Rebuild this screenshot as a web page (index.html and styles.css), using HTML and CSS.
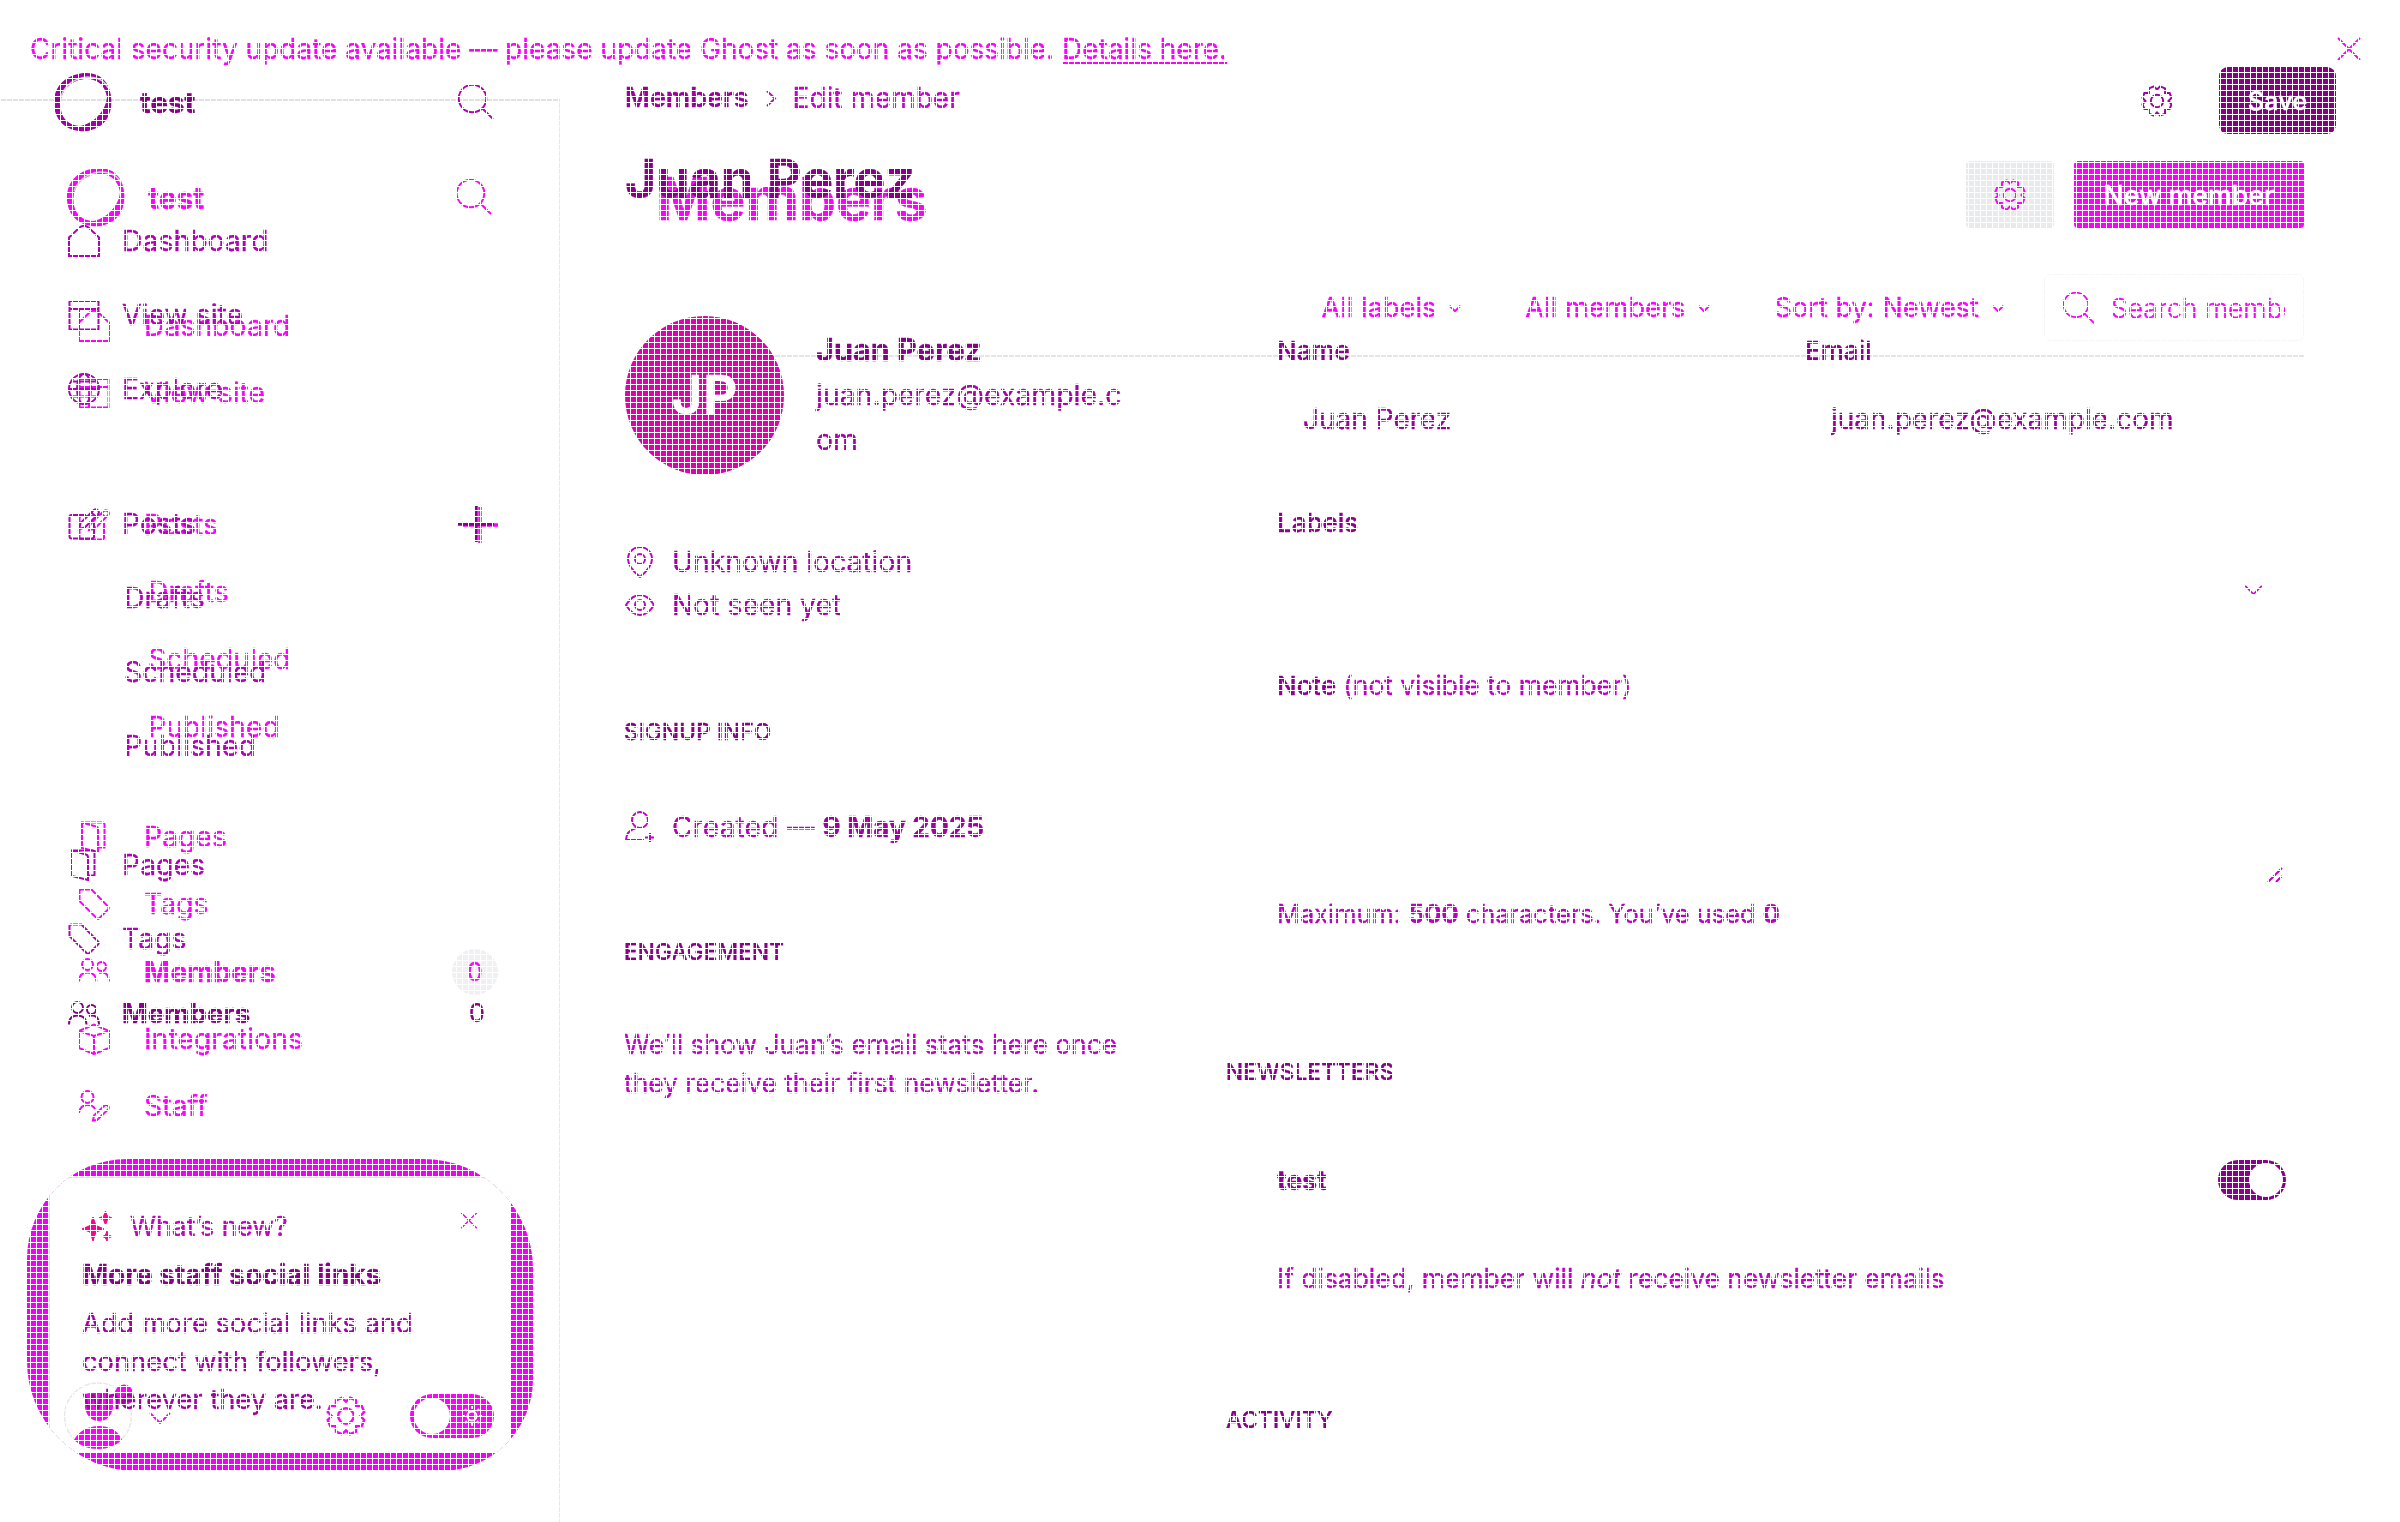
FILE: index.html
```html
<!DOCTYPE html>
<html lang="en">
<head>
<meta charset="utf-8">
<title>Ghost Admin – Members</title>
<link rel="stylesheet" href="styles.css">
</head>
<body>
<svg class="defs" width="0" height="0" aria-hidden="true">
  <symbol id="ring" viewBox="0 0 60 60"><path fill-rule="evenodd" d="M30 1C46 0 56 8 58 24C60 42 53 55 35 59C16 61 3 51 1 34C0 17 9 4 30 1ZM34 7C20 7 8 17 7.500 32C7 46 16 54 27 54C40 52 53 39 54 25C52 13 44 7 34 7Z" fill="currentColor"/><path d="M8 24Q15 7 34 5Q50 5 55 16" fill="none" stroke="#d4cfd6" stroke-width="1.6"/></symbol>
  <symbol id="search" viewBox="0 0 36 36"><circle cx="14.5" cy="14.5" r="13.8"/><path d="M24 24L35 35"/></symbol>
  <symbol id="home" viewBox="0 0 32 32"><path d="M1 31V12.5L11.5 2.5Q16 -1 20.500 2.500L31 12.500V31Z"/></symbol>
  <symbol id="site" viewBox="0 0 32 32"><path d="M1.500 2H30.500V30.500H1.500ZM1.500 10H30.500M11 10V30.500"/></symbol>
  <symbol id="globe" viewBox="0 0 32 32"><circle cx="16" cy="16" r="15"/><ellipse cx="16" cy="16" rx="7" ry="15"/><path d="M1 16H31M3.500 8.500H28.500M3.500 23.500H28.500"/></symbol>
  <symbol id="edit" viewBox="0 0 32 32"><path d="M18 7H3.500Q1.500 7 1.500 9V28.500Q1.500 30.500 3.500 30.500H24Q26 30.500 26 28.500V14M11 21L12.500 15L26 1.800Q28.500 0.500 30.500 3Q31.500 4.800 30 6.200L16.800 19.500ZM23.500 4.500L27.800 8.800"/></symbol>
  <symbol id="pages" viewBox="0 0 32 32"><path d="M4 1.500V27L20 31V8.500Q20 6 18 5.500ZM4 1.500H24.500Q26.500 1.500 26.500 3.500V26.500H20"/></symbol>
  <symbol id="tag" viewBox="0 0 32 32"><path d="M1.500 3Q1.500 1.500 3 1.500H13.500L30 18.500Q31.500 20 30 21.500L21 30.500Q20 31.500 18.500 30L1.500 13Z"/></symbol>
  <symbol id="people" viewBox="0 0 32 24"><circle cx="9.500" cy="6.500" r="5.500"/><path d="M1 23.500Q1 14.500 9.500 14.500T18.500 23.500M21 15Q30.500 12.500 31 23.500"/><circle cx="23.500" cy="8.500" r="4.500"/></symbol>
  <symbol id="box" viewBox="0 0 32 32"><path d="M1 8L16 1.500L31 8V25L16 31L1 25ZM1 8L16 13L31 8M16 13V31"/></symbol>
  <symbol id="staff" viewBox="0 0 32 32"><circle cx="9.500" cy="7" r="6"/><path d="M1 23Q2 15 9.500 15Q15 15 17 19M15 30.500L16 25.500L26.500 15.500Q29 14 30.500 16.500Q31.500 18.500 29.500 20L19 30Z"/></symbol>
  <symbol id="gear" viewBox="0 0 32 32"><path d="M16 4.500L19.200 1.400L24 3.400L24.100 7.900L28.600 8L30.600 12.800L27.500 16L30.600 19.200L28.600 24L24.100 24.100L24 28.600L19.200 30.600L16 27.500L12.800 30.600L8 28.600L7.900 24.100L3.400 24L1.400 19.200L4.500 16L1.400 12.800L3.400 8L7.900 7.900L8 3.400L12.800 1.400Z"/><circle cx="16" cy="16" r="6.200"/></symbol>
  <symbol id="down" viewBox="0 0 22 12"><path d="M1 1L11 11L21 1"/></symbol>
  <symbol id="cross" viewBox="0 0 24 24"><path d="M1 1L23 23M23 1L1 23"/></symbol>
  <symbol id="plus" viewBox="0 0 36 36"><path d="M0 18H36M18 0V36"/></symbol>
</svg>

<div class="stage">

  <div class="layer detail">
    <aside class="sidebar">
      <div class="brand">
        <svg class="ring"><use href="#ring"/></svg><b>test</b>
        <svg class="icon find"><use href="#search"/></svg>
      </div>
      <nav class="nav">
        <a class="item"><svg class="icon"><use href="#home"/></svg>Dashboard</a>
        <a class="item"><svg class="icon"><use href="#site"/></svg>View site</a>
        <a class="item"><svg class="icon"><use href="#globe"/></svg>Explore</a>
      </nav>
      <nav class="nav posts">
        <a class="item"><svg class="icon"><use href="#edit"/></svg>Posts<svg class="icon plus"><use href="#plus"/></svg></a>
        <a class="item sub">Drafts</a>
        <a class="item sub">Scheduled</a>
        <a class="item sub">Published</a>
      </nav>
      <nav class="nav content">
        <a class="item"><svg class="icon"><use href="#pages"/></svg>Pages</a>
        <a class="item"><svg class="icon"><use href="#tag"/></svg>Tags</a>
        <a class="item current"><svg class="icon people"><use href="#people"/></svg>Members<span class="count">0</span></a>
      </nav>
      <div class="glow">
        <div class="news">
          <div class="news-head">
            <svg class="spark" viewBox="0 0 30 30"><path d="M11 6L14 14.500L22 18L14 21L11 30L8 21L0 18L8 14.500ZM23.500 0L25.300 5L30 7L25.300 9L23.500 14L21.700 9L17 7L21.700 5ZM25 20L26.500 24L30 25.500L26.500 27L25 30L23.500 27L20.500 25.500L23.500 24Z" fill="currentColor" stroke="currentColor"/></svg>
            <span>What’s new?</span>
            <svg class="icon shut"><use href="#cross"/></svg>
          </div>
          <h3>More staff social links</h3>
          <p>Add more social links and connect with followers, wherever they are.</p>
        </div>
      </div>
    </aside>
    <main class="editor">
      <header class="topbar">
        <div class="crumbs"><b>Members</b><svg class="icon next" viewBox="0 0 10 17"><path d="M1 1L9 8.500L1 16"/></svg><span>Edit member</span></div>
        <div class="gear-slot"><svg class="icon gear"><use href="#gear"/></svg></div>
        <button class="save">Save</button>
      </header>
      <h1>Juan Perez</h1>
      <div class="columns">
        <section class="profile">
          <div class="who">
            <div class="avatar">JP</div>
            <div class="ident"><b>Juan Perez</b><span>juan.perez@example.com</span></div>
          </div>
          <ul class="facts">
            <li><svg class="icon" viewBox="0 0 30 32"><path d="M15 31Q3 21 3 13A12 12 0 0 1 27 13Q27 21 15 31Z"/><circle cx="15" cy="13" r="5"/></svg>Unknown location</li>
            <li><svg class="icon" viewBox="0 0 30 32"><path d="M1 16Q7 6 15 6T29 16Q23 26 15 26T1 16Z"/><circle cx="15" cy="16" r="5"/></svg>Not seen yet</li>
          </ul>
          <h4 class="signup">Signup info</h4>
          <p class="created"><svg class="icon" viewBox="0 0 30 32"><circle cx="15" cy="9" r="8"/><path d="M19 29H1Q1 20 11 17M25 22V31M20 26.500H30"/></svg>Created — <b>9 May 2025</b></p>
          <h4 class="engage">Engagement</h4>
          <p class="stats">We’ll show Juan’s email stats here once they receive their first newsletter.</p>
        </section>
        <section class="form">
          <div class="fields">
            <div class="pair"><label>Name</label><div class="value">Juan Perez</div></div>
            <div class="pair"><label>Email</label><div class="value">juan.perez@example.com</div></div>
          </div>
          <div class="block">
            <label class="lab">Labels</label>
            <div class="select"><svg class="icon caret"><use href="#down"/></svg></div>
            <label>Note <span>(not visible to member)</span></label>
            <div class="area"><svg class="icon grip" viewBox="0 0 16 16"><path d="M1 15L15 1M9 15L15 9"/></svg></div>
            <p class="max">Maximum: <b>500</b> characters. You’ve used <b>0</b></p>
          </div>
          <h4 class="letters">Newsletters</h4>
          <div class="block">
            <div class="toggle-row"><b>test</b><span class="switch"></span></div>
            <p class="hint">If disabled, member will <i>not</i> receive newsletter emails</p>
          </div>
          <h4 class="activity">Activity</h4>
        </section>
      </div>
    </main>
  </div>

  <div class="layer list">
    <div class="banner"><p>Critical security update available — please update Ghost as soon as possible. <a>Details here.</a></p><svg class="icon"><use href="#cross"/></svg></div>
    <div class="frame">
      <aside class="sidebar">
        <div class="brand">
          <svg class="ring"><use href="#ring"/></svg><b>test</b>
          <svg class="icon find"><use href="#search"/></svg>
        </div>
        <nav class="nav">
          <a class="item"><svg class="icon"><use href="#home"/></svg>Dashboard</a>
          <a class="item"><svg class="icon"><use href="#site"/></svg>View site</a>
        </nav>
        <nav class="nav posts">
          <a class="item"><svg class="icon"><use href="#edit"/></svg>Posts<svg class="icon plus"><use href="#plus"/></svg></a>
          <a class="item sub">Drafts</a>
          <a class="item sub">Scheduled</a>
          <a class="item sub">Published</a>
        </nav>
        <nav class="nav content">
          <a class="item"><svg class="icon"><use href="#pages"/></svg>Pages</a>
          <a class="item"><svg class="icon"><use href="#tag"/></svg>Tags</a>
          <a class="item current"><svg class="icon people"><use href="#people"/></svg>Members<span class="count">0</span></a>
          <a class="item"><svg class="icon"><use href="#box"/></svg>Integrations</a>
          <a class="item"><svg class="icon"><use href="#staff"/></svg>Staff</a>
        </nav>
        <footer class="account">
          <svg class="face" viewBox="0 0 70 68"><ellipse cx="34" cy="34" rx="33.500" ry="33" fill="none" stroke="#e8e8ea" stroke-width="1.500"/><path d="M21 12Q34 8 49 13V26Q46 39 35 39T21 26ZM10 58Q18 44 35 44T58 58Q48 67 34 67T10 58Z" fill="currentColor"/><ellipse cx="60" cy="13" rx="9.500" ry="10.500" fill="currentColor"/></svg>
          <svg class="icon caret"><use href="#down"/></svg>
          <svg class="icon gear"><use href="#gear"/></svg>
          <span class="theme"><svg class="icon" viewBox="0 0 20 20"><circle cx="10" cy="10" r="4.500"/><path d="M10 0V3M10 17V20M0 10H3M17 10H20M3 3L5 5M15 15L17 17M17 3L15 5M5 15L3 17"/></svg></span>
        </footer>
      </aside>
      <main class="members">
        <header class="heading">
          <h1>Members</h1>
          <button class="options"><svg class="icon gear"><use href="#gear"/></svg></button>
          <button class="new">New member</button>
        </header>
        <div class="filters">
          <span class="filter">All labels<svg class="icon"><use href="#down"/></svg></span>
          <span class="filter">All members<svg class="icon"><use href="#down"/></svg></span>
          <span class="filter">Sort by: Newest<svg class="icon"><use href="#down"/></svg></span>
          <div class="searchbox"><svg class="icon"><use href="#search"/></svg><span>Search members...</span></div>
        </div>
      </main>
    </div>
  </div>

</div>
</body>
</html>
```

FILE: styles.css
```css
* { box-sizing: border-box; margin: 0; padding: 0; }
body { width: 2400px; height: 1522px; overflow: hidden; background: #fff; font: 400 28px/40px Inter, "Liberation Sans", sans-serif; -webkit-text-stroke: 0.4px currentColor; }
ul { list-style: none; }
button { border: 0; font: inherit; }
.defs { position: absolute; }

/* Two screens share one stage; the mesh runs over both. */
.stage { position: relative; display: grid; width: 2400px; height: 1522px; isolation: isolate; }
.layer { grid-area: 1 / 1; min-width: 0; height: 1522px; }
.stage::after {
  content: ""; position: absolute; inset: 0; pointer-events: none;
  background:
    repeating-linear-gradient(90deg, #fff 0 1px, transparent 1px 6px),
    repeating-linear-gradient(180deg, #fff 0 1px, transparent 1px 6px);
}

.icon { fill: none; stroke: currentColor; stroke-width: 2; overflow: visible; flex: none; display: block; }
.ring { width: 60px; height: 60px; flex: none; }
.sidebar { width: 560px; flex: none; }
.brand { display: flex; align-items: center; height: 74px; }
.find { width: 36px; height: 36px; margin-left: auto; }
.nav { font-size: 28.400px; }
.item { display: flex; align-items: center; }
.item > .icon:first-child { width: 32px; height: 32px; }
.item > .icon.people { height: 24px; }
.item .plus { width: 36px; height: 36px; margin-left: auto; stroke-width: 3.500; }
.current { font-weight: 700; }
.count { margin-left: auto; font-weight: 400; text-align: center; }

/* Member detail screen */
.detail { display: flex; color: #b400b8; }
.detail .sidebar { position: relative; padding-top: 65px; }
.detail .brand { padding: 0 66px 0 53px; color: #8b008b; font-size: 29.500px; }
.detail .brand b { margin-left: 27px; }
.detail .brand .ring { color: #a000a4; }
.detail .find { color: #b400b8; }
.detail .nav { padding: 0 66px 0 68px; }
.detail .brand + .nav { margin-top: 65px; }
.detail .item { height: 74px; gap: 22px; }
.detail .item .plus { color: #8b008b; }
.detail .posts { margin-top: 61px; }
.detail .content { margin-top: 45px; }
.detail .sub { padding-left: 56px; }
.detail .current { color: #8b008b; font-size: 27.700px; }
.detail .count { width: 38px; margin-right: -2px; font-size: 25px; }

.glow { position: absolute; left: 27px; top: 1159px; width: 506px; height: 312px; overflow: hidden; border-radius: 100px 110px 92px 110px; background: #f000f8; padding: 18px 22px 18px; }
.news { height: 276px; border: 1px solid #dcdcdc; background: #fff; padding: 30px 31px 0 32px; border-radius: 14px; }
.news-head { display: flex; height: 36px; align-items: center; font-size: 26.500px; color: #c400c4; }
.news-head span { margin-left: 18px; }
.spark { width: 30px; height: 30px; color: #ff0090; }
.shut { width: 18px; height: 17px; margin: -11px 1px 0 auto; color: #f000f0; }
.news h3 { margin-top: 11px; font-size: 28px; color: #8b008b; white-space: nowrap; }
.news p { margin-top: 10px; width: 350px; font-size: 27.300px; line-height: 38px; color: #a400a4; }

.editor { flex: 1; padding: 67px 64px 0 65px; }
.topbar { display: flex; height: 67px; align-items: center; }
.crumbs { display: flex; align-items: center; margin-top: -6px; font-size: 28px; color: #c800cc; }
.crumbs b { font-weight: 600; font-size: 27px; color: #9b009b; }
.next { width: 10px; height: 17px; margin: 2px 17px 0; }
.gear-slot { margin-left: auto; width: 92px; display: flex; justify-content: center; color: #a400a4; margin-right: 16px; }
.gear { width: 32px; height: 32px; }
.save { width: 117px; height: 67px; border-radius: 9px; background: #850085; color: #fff; font-weight: 500; font-size: 25.500px; }
.editor h1 { margin-top: 15px; height: 60px; line-height: 60px; font-size: 53.600px; color: #870087; }
.columns { display: flex; margin-top: 107px; }
.profile { width: 601px; flex: none; }
.who { display: flex; height: 159px; }
.avatar { width: 159px; height: 159px; border-radius: 50%; background: #e000b0; color: #fff; font-weight: 600; font-size: 54px; line-height: 158px; text-align: center; }
.ident { width: 314px; margin: 11px 0 0 32px; line-height: 45px; color: #a800a8; word-break: break-all; }
.ident b { display: block; font-weight: 700; font-size: 30.600px; color: #8b008b; }
.ident span { display: block; font-size: 28.400px; }
.facts { margin-top: 65px; color: #a800a8; }
.facts li, .created { display: flex; align-items: center; height: 43.500px; font-size: 28.300px; white-space: pre; }
.facts .icon, .created .icon { width: 30px; height: 32px; margin-right: 17px; color: #c400c8; }
h4 { font-weight: 500; font-size: 22.500px; letter-spacing: 0.200px; text-transform: uppercase; color: #8b008b; height: 40px; }
.profile h4, .stats { margin-left: -1px; }
.signup { margin-top: 85px; }
.created { margin-top: 53px; color: #b400b8; }
.created b { font-size: 27.900px; color: #a000a4; }
.engage { margin-top: 83px; }
.stats { width: 510px; margin-top: 53px; font-size: 26.400px; line-height: 39px; color: #c400cc; }

.form { width: 1110px; padding-top: 15px; }
.fields, .block { padding-left: 51px; }
.fields { display: grid; grid-template-columns: 528px 1fr; }
label { display: block; font-weight: 500; font-size: 26px; color: #900090; }
label span { font-weight: 400; font-size: 26.400px; color: #c400c8; }
.value { margin-top: 28px; padding-left: 26px; font-size: 28px; color: #9b009b; }
.lab { margin-top: 64px; }
.select { display: flex; justify-content: flex-end; align-items: center; height: 60px; margin: 17px 0 45px; padding-right: 73px; color: #d800dc; }
.select .caret { width: 19px; height: 10px; }
.area { display: flex; justify-content: flex-end; align-items: flex-end; height: 177px; padding-right: 53px; color: #c400c8; }
.grip { width: 16px; height: 16px; }
.max { margin-top: 11px; font-size: 25.400px; color: #bc00c0; }
.letters { margin-top: 118px; }
.toggle-row { display: flex; justify-content: space-between; margin-top: 68px; padding-right: 50px; height: 40px; font-size: 26.500px; color: #900090; }
.switch { width: 68px; height: 40px; padding: 3px; border-radius: 20px; background: #8b008b; display: flex; justify-content: flex-end; }
.switch::before { content: ""; width: 34px; height: 34px; border-radius: 50%; background: #fff; }
.hint { margin-top: 58px; font-size: 26.430px; color: #c400c8; }
.activity { margin-top: 102px; }

/* Members list screen */
.list { color: #f0f; mix-blend-mode: multiply; }
.banner { display: flex; align-items: center; justify-content: space-between; height: 99px; padding: 0 39px 1px 30px; }
.banner a { text-decoration: underline; text-underline-offset: 3px; text-decoration-thickness: 2px; }
.banner .icon { width: 24px; height: 24px; }
.frame { display: flex; height: 1423px; }
.list .sidebar { border-top: 2px solid #e1e1e1; border-right: 1px solid #e8e8e8; padding-top: 59px; }
.list .brand { padding: 0 67px 0 66px; font-size: 30px; }
.list .brand b { margin-left: 22px; padding-top: 1px; }
.list .nav { padding: 0 61px 0 78px; }
.list .brand + .nav { margin-top: 58px; }
.list .item { height: 67.300px; gap: 34px; }
.list .posts { margin-top: 64.500px; }
.list .content { margin-top: 43.100px; }
.list .sub { padding-left: 70px; }
.list .count { width: 46px; height: 46px; border-radius: 50%; background: #f0f0f3; line-height: 47px; font-size: 25px; }
.list .current .people { margin-top: -3px; }
.account { display: flex; align-items: center; height: 68px; margin-top: 242px; padding: 0 65px 0 64px; }
.face { width: 70px; height: 68px; }
.account .caret { width: 22px; height: 12px; margin: 4px 155px 0 15px; }
.account .gear { width: 40px; height: 40px; stroke-width: 2; }
.theme { display: flex; align-items: center; gap: 12px; width: 84px; height: 44px; padding: 4px; margin-left: auto; border-radius: 22px; background: #f0f; color: #fff; }
.theme::before { content: ""; width: 36px; height: 36px; border-radius: 50%; background: #fff; }
.theme .icon { width: 20px; height: 20px; }

.members { width: 1744px; padding: 62px 0 0 96px; }
.heading { display: flex; align-items: center; height: 67px; }
.heading h1 { padding-top: 8px; line-height: 60px; font-size: 58.600px; margin-right: auto; }
.options { width: 88px; height: 67px; border-radius: 4px; background: #e9eaec; color: #f0f; display: flex; align-items: center; justify-content: center; margin-right: 20px; }
.new { width: 230px; height: 67px; border-radius: 4px; background: #f0f; color: #fff; font-weight: 500; font-size: 26.800px; }
.filters { display: flex; justify-content: flex-end; margin-top: 46px; height: 83px; border-bottom: 2px solid #e6e6e6; font-size: 27.200px; }
.filter { display: flex; align-items: center; height: 67px; margin-right: 64px; }
.filter:nth-child(3) { margin-right: 40px; }
.filter .icon { width: 12px; height: 7px; margin-left: 13px; margin-top: 2px; stroke-width: 3.500; }
.searchbox { display: flex; align-items: center; width: 260px; height: 67px; padding: 0 18px; border: 1px solid #f6f6f7; border-radius: 6px; overflow: hidden; }
.searchbox .icon { width: 32px; height: 32px; margin-right: 16px; }
.searchbox span { flex: 1; overflow: hidden; white-space: nowrap; font-size: 26.500px; font-weight: 300; }
```
